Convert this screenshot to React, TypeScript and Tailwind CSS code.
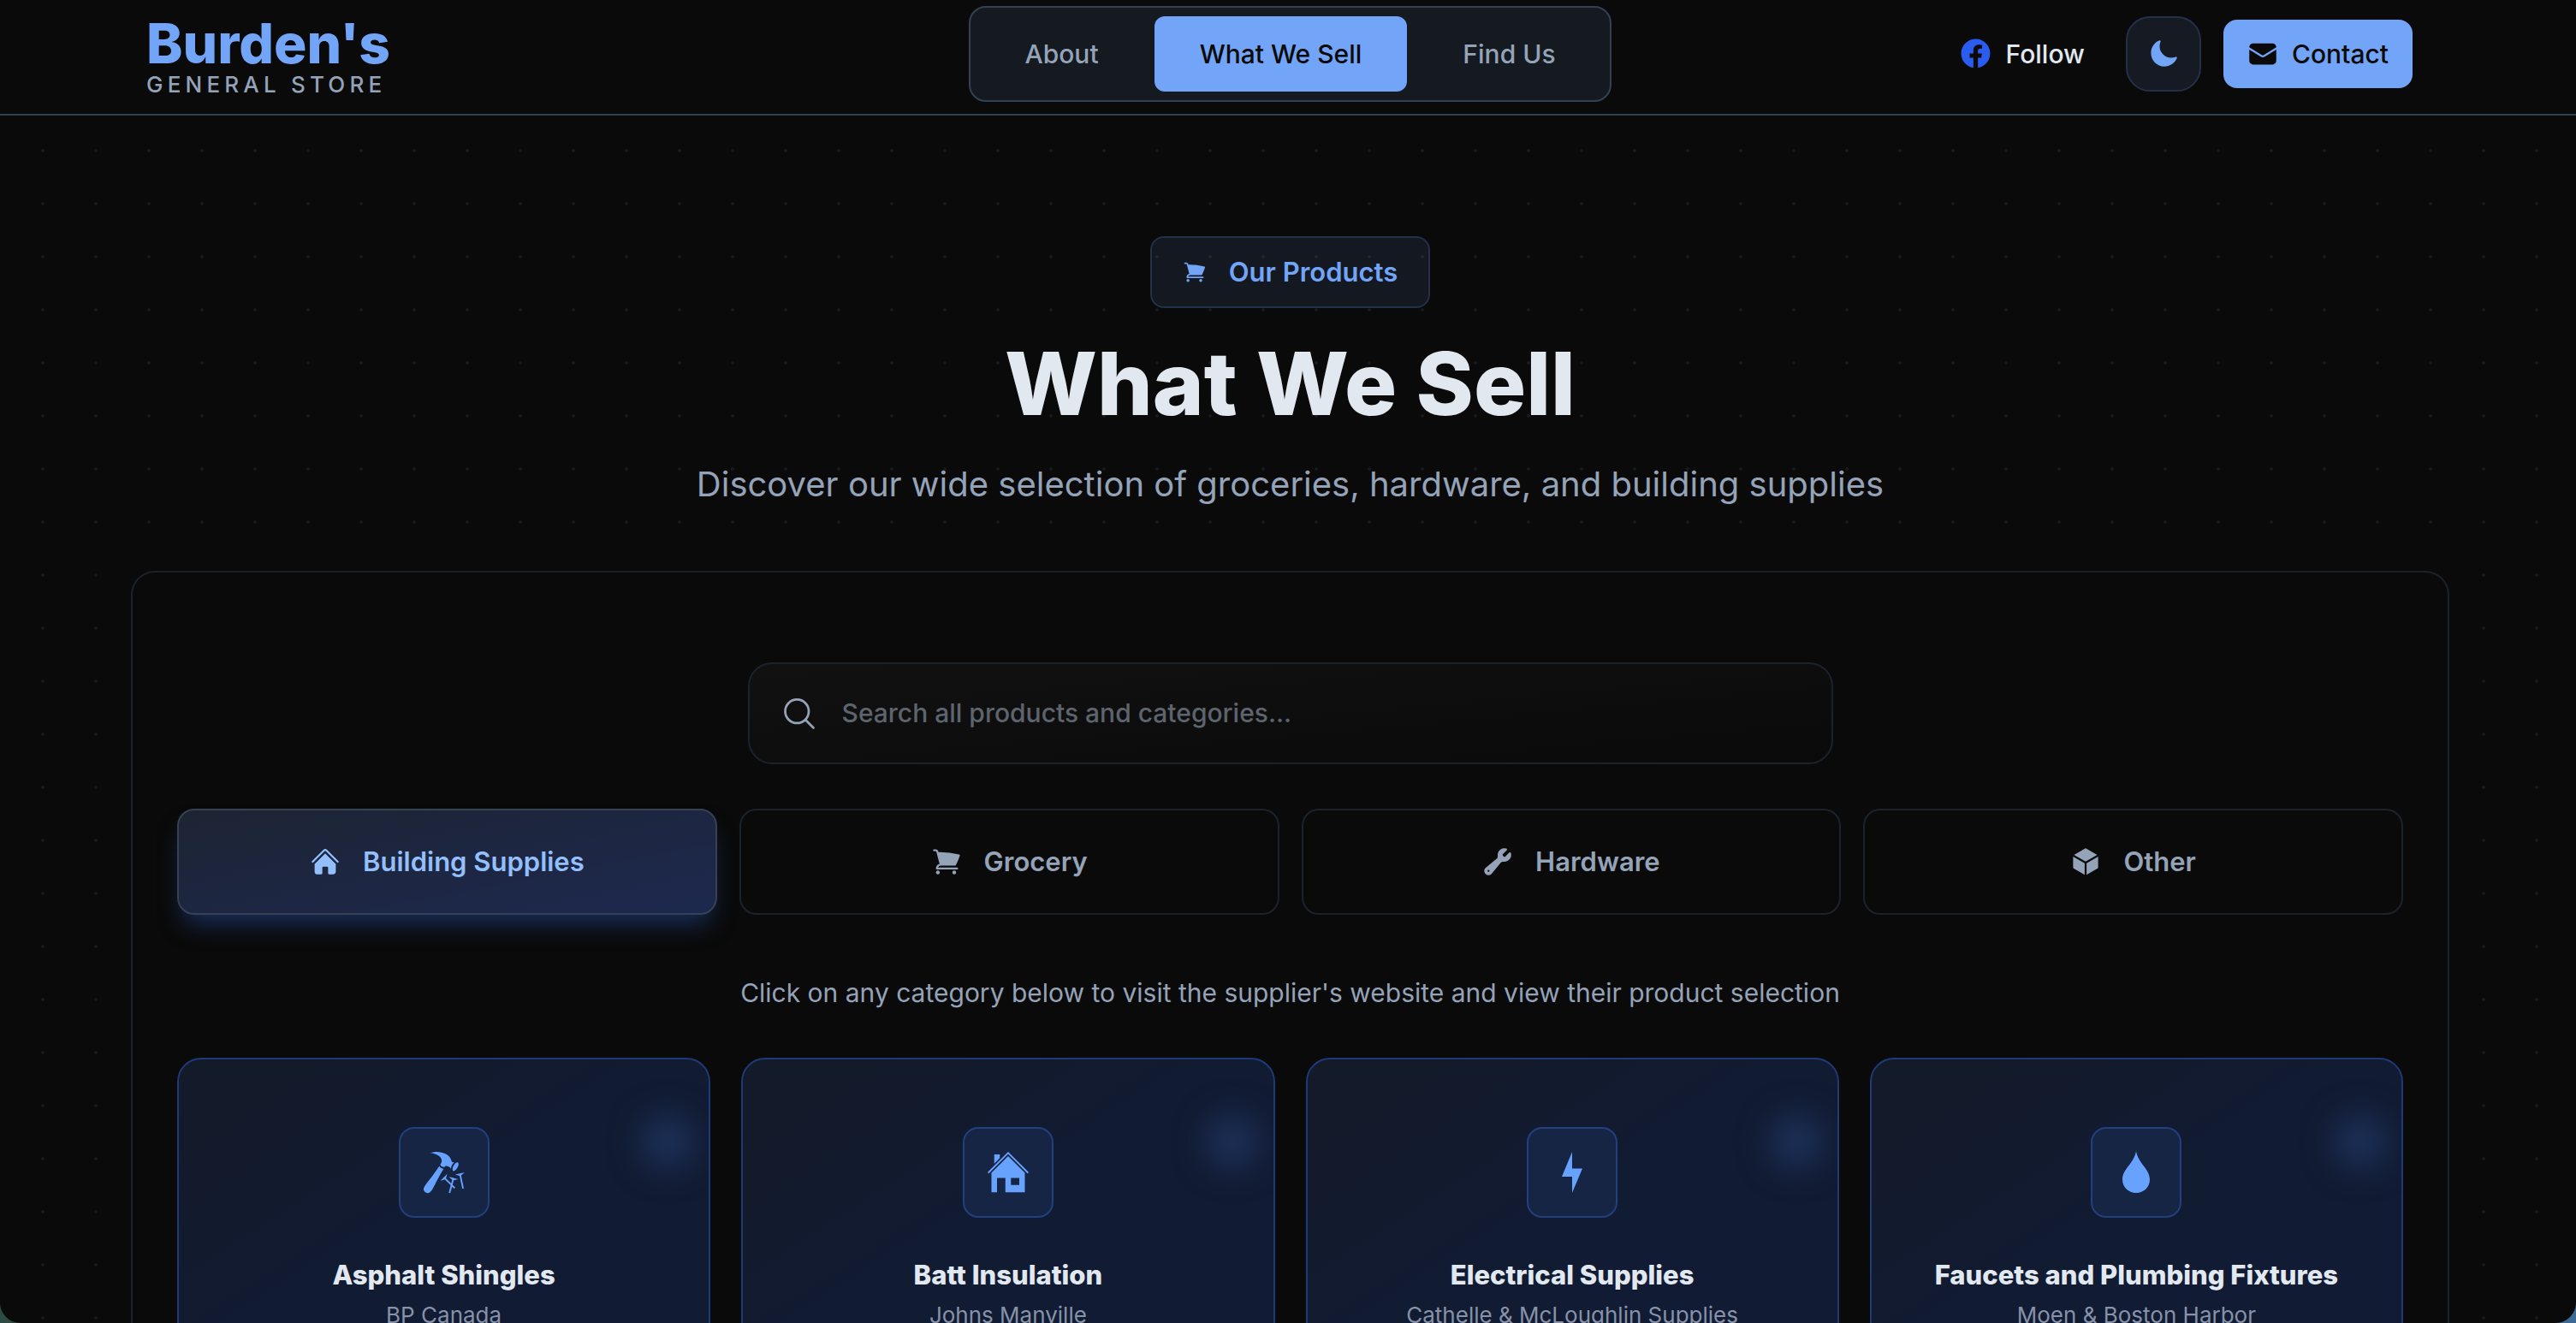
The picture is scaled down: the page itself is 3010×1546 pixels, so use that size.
import { HiHome, HiShoppingCart, HiWrench, HiCube, HiEnvelope, HiMoon, HiOutlineMagnifyingGlass } from "react-icons/hi2";
import { FaFacebook } from "react-icons/fa";
import { GiHammerNails, GiHouse } from "react-icons/gi";
import type { ComponentType } from "react";

type Icon = ComponentType<{ className?: string }>;

function Bolt({ className }: { className?: string }) {
  return (
    <svg viewBox="-2 -2 52 52" fill="currentColor" className={className} aria-hidden="true">
      <path d="M24 0v19.500h12L24 48V29H12z" />
    </svg>
  );
}

function Drop({ className }: { className?: string }) {
  return (
    <svg viewBox="-2 -1 52 52" fill="currentColor" className={className} aria-hidden="true">
      <path d="M24 0c2.500 15 16 20.500 16 33.500C40 42 33 49 24 49S8 42 8 33.500C8 20.500 21.500 15 24 0z" />
    </svg>
  );
}

const navItems = ["About", "What We Sell", "Find Us"];

const tabs: { label: string; icon: Icon }[] = [
  { label: "Building Supplies", icon: HiHome },
  { label: "Grocery", icon: HiShoppingCart },
  { label: "Hardware", icon: HiWrench },
  { label: "Other", icon: HiCube },
];

const cards: { title: string; supplier: string; icon: Icon }[] = [
  { title: "Asphalt Shingles", supplier: "BP Canada", icon: GiHammerNails },
  { title: "Batt Insulation", supplier: "Johns Manville", icon: GiHouse },
  { title: "Electrical Supplies", supplier: "Cathelle & McLoughlin Supplies", icon: Bolt },
  { title: "Faucets and Plumbing Fixtures", supplier: "Moen & Boston Harbor", icon: Drop },
];

function Header() {
  return (
    <header className="border-b-2 border-[#334155] bg-[#0a0a0a] pr-[148px] pl-[153px]">
      <div className="grid h-[133px] grid-cols-[1fr_auto_1fr] items-center pb-2">
        <a href="#" className="mt-2 ml-[18px] justify-self-start">
          <span className="block text-[64px] leading-[64px] font-extrabold text-[#72a4f7]">Burden's</span>
          <span className="block text-[26px] leading-8 font-medium tracking-[0.2em] text-[#94a3b8]">GENERAL STORE</span>
        </a>
        <nav className="flex gap-3 rounded-[20px] border-2 border-[#334155] bg-[#151920] p-2.5" aria-label="Main">
          {navItems.map((item) => (
            <a
              key={item}
              href="#"
              className={
                item === "What We Sell"
                  ? "rounded-xl bg-[#72a4f7] px-[53px] py-6 text-[30px] leading-10 font-medium text-[#0a0a0a]"
                  : "rounded-xl px-[53px] py-6 text-[30px] leading-10 font-medium text-[#94a3b8]"
              }
            >
              {item}
            </a>
          ))}
        </nav>
        <div className="mr-[43px] flex items-center justify-self-end">
          <a href="#" className="flex items-center gap-[18px] text-[30px] leading-10 font-medium text-[#e2e8f0]">
            <FaFacebook className="size-[35px] text-[#2b5cf0]" />
            Follow
          </a>
          <button aria-label="Toggle theme" className="ml-12 flex size-22 items-center justify-center rounded-[28px] border-2 border-[#22304a] bg-[#151a23]">
            <HiMoon className="size-9 text-[#72a4f7]" />
          </button>
          <a href="#" className="ml-[26px] flex items-center gap-4 rounded-2xl bg-[#72a4f7] px-7 py-5 text-[30px] leading-10 font-medium text-[#0a0a0a]">
            <HiEnvelope className="size-9" />
            Contact
          </a>
        </div>
      </div>
    </header>
  );
}

export default function App() {
  return (
    <div className="h-screen bg-linear-to-r from-[#2d4a44] to-[#3d6a94]">
      <div className="h-full overflow-hidden rounded-b-[24px] bg-[#0a0a0a] font-['Inter',sans-serif]">
        <Header />
        <main className="bg-[radial-gradient(circle_at_2px_2px,#17191c_2px,transparent_2px)] bg-size-[62px_62px] bg-position-[48px_39px] pr-[148px] pl-[153px]">
          <section className="flex flex-col items-center pt-[141px] text-center">
            <p className="flex items-center gap-[26px] rounded-2xl border-2 border-[#22304a] bg-[#72a4f7]/10 px-9 py-5 text-[31px] leading-10 font-semibold text-[#72a4f7]">
              <HiShoppingCart className="size-7" />
              Our Products
            </p>
            <h1 className="mt-7 text-[102px] leading-[120px] font-extrabold text-[#e2e8f0]">What We Sell</h1>
            <p className="mt-7 text-[40px] leading-[60px] text-[#94a3b8]">
              Discover our wide selection of groceries, hardware, and building supplies
            </p>
          </section>

          <section className="mt-[71px] rounded-t-[28px] border-2 border-b-0 border-[#1c222c] bg-[#0a0a0a] px-[52px] pt-[105px] pb-16">
            <label className="mx-auto flex h-[119px] max-w-[1268px] items-center gap-7 rounded-[28px] border-2 border-[#1c222c] bg-linear-to-br from-[#111111] to-[#0a0a0a] px-9">
              <HiOutlineMagnifyingGlass className="size-11 text-[#94a3b8]" />
              <input
                aria-label="Search products"
                placeholder="Search all products and categories..."
                className="flex-1 bg-transparent text-[30px] font-medium text-[#e2e8f0] outline-none placeholder:text-[#5e646e]"
              />
            </label>

            <div className="mt-[52px] grid grid-cols-4 gap-[26px]">
              {tabs.map(({ label, icon: TabIcon }, i) => (
                <button
                  key={label}
                  className={
                    i === 0
                      ? "flex h-[124px] items-center justify-center gap-[26px] rounded-[20px] border-2 border-[#364254] bg-linear-to-br from-[#1d2433] to-[#1d284f] text-[31px] font-semibold text-[#93c0fd] shadow-[0_18px_28px_-8px_#1a2f5c]"
                      : "flex h-[124px] items-center justify-center gap-[26px] rounded-[20px] border-2 border-[#1c222c] text-[31px] font-semibold text-[#94a3b8]"
                  }
                >
                  <TabIcon className="size-9" />
                  {label}
                </button>
              ))}
            </div>

            <p className="mt-[68px] text-center text-[30px] leading-[46px] text-[#94a3b8]">
              Click on any category below to visit the supplier's website and view their product selection
            </p>

            <div className="mt-[53px] grid grid-cols-4 gap-9">
              {cards.map(({ title, supplier, icon: CardIcon }) => (
                <a
                  key={title}
                  href="#"
                  className="relative flex flex-col items-center overflow-hidden rounded-[28px] border-2 border-[#1f3a78] bg-linear-to-br from-[#131a28] via-[#111b32] to-[#111b35] px-8 pt-[79px] pb-20 text-center"
                >
                  <span className="absolute top-[64px] right-[16px] size-16 rounded-full bg-[#1d3058] blur-[18px]" />
                  <span className="flex size-[106px] items-center justify-center rounded-[18px] border-2 border-[#233f80] bg-[#172545]">
                    <CardIcon className="size-[52px] text-[#68a2ff]" />
                  </span>
                  <h3 className="mt-11 text-[31px] leading-[46px] font-extrabold text-[#e2e8f0]">{title}</h3>
                  <p className="mt-1 text-[26px] leading-10 text-[#8792a8]">{supplier}</p>
                </a>
              ))}
            </div>
          </section>
        </main>
      </div>
    </div>
  );
}
